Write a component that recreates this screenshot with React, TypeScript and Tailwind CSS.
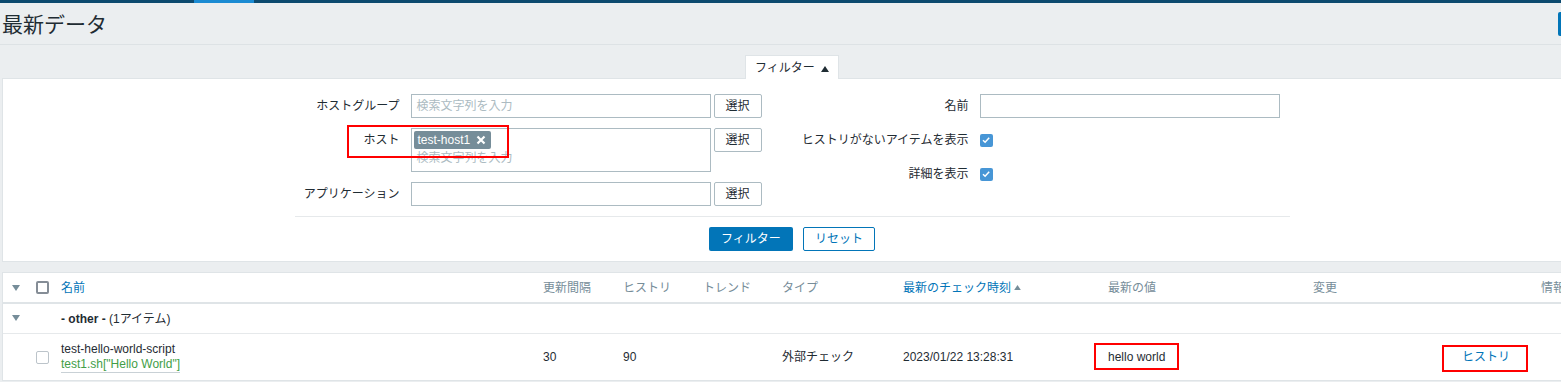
import React from "react";

const font = "font-['Liberation_Sans','Noto_Sans_CJK_JP',sans-serif]";

const SelectButton = () => (
  <button className="ml-[3px] h-6 w-12 shrink-0 rounded-[2px] border border-[#acbbc2] bg-white text-[12px] text-[#1f2c33]">
    選択
  </button>
);

const CheckedBox = () => (
  <span className="flex h-[13px] w-[13px] items-center justify-center rounded-[2px] bg-[#4796d6]">
    <svg viewBox="0 0 10 10" className="h-[10px] w-[10px]">
      <path d="M2 5.3 L4.1 7.3 L8.2 2.8" stroke="white" strokeWidth="1.5" fill="none" />
    </svg>
  </span>
);

const Arrow = () => (
  <svg viewBox="0 0 8 6" className="h-[6px] w-[8px]">
    <path d="M0 0 L8 0 L4 6 Z" fill="#768d99" />
  </svg>
);

const RedBox = ({ className }: { className: string }) => (
  <span className={"pointer-events-none absolute border-2 border-[#ff0000] " + className} />
);

const cols =
  "grid grid-cols-[25px_27px_482px_80px_80px_79px_121px_205px_205px_149px_79px_1fr]";

const App = () => {
  return (
    <div className={"h-[382px] w-[1561px] overflow-hidden bg-[#ebeef0] text-[12px] text-[#1f2c33] " + font}>
      <div className="w-[1584px]">
        {/* top bar */}
        <div className="flex h-[3px] bg-[#0c4a6f]">
          <div className="ml-[194px] w-[60px] bg-[#1b8bd3]" />
        </div>

        {/* header */}
        <div className="flex h-[42px] items-center justify-between border-b border-[#dde2e5] px-[2px]">
          <h1 className="pt-[2px] text-[21px] font-normal leading-none text-[#1f2c33]">最新データ</h1>
          <div className="h-6 w-6 rounded-[2px] bg-[#0275b8]" />
        </div>

        {/* filter */}
        <div className="mt-[10px] px-[2px]">
          <div className="flex justify-center">
            <div className="relative z-10 -mb-px flex h-6 w-[94px] items-center justify-center gap-[6px] border border-b-0 border-[#dfe4e7] bg-white text-[#1f2c33]">
              <span>フィルター</span>
              <svg viewBox="0 0 8 6" className="mt-[2px] h-[6px] w-[8px]">
                <path d="M0 6 L8 6 L4 0 Z" fill="#1f2c33" />
              </svg>
            </div>
          </div>
          <div className="border border-[#dfe4e7] bg-white pt-[15px] pb-[10px]">
            <div className="mx-auto w-[995px]">
              <div className="flex">
                {/* left column */}
                <div className="flex flex-col gap-[10px]">
                  <div className="flex items-start">
                    <label className="flex h-6 w-[105px] items-center justify-end">ホストグループ</label>
                    <div className="ml-[11px] flex h-6 w-[300px] items-center border border-[#acbbc2] px-[5px] text-[#acbbc2]">
                      検索文字列を入力
                    </div>
                    <SelectButton />
                  </div>
                  <div className="relative flex items-start">
                    <RedBox className="left-[52px] top-[-3px] h-[33px] w-[162px]" />
                    <label className="flex h-6 w-[105px] items-center justify-end">ホスト</label>
                    <div className="ml-[11px] flex h-[44px] w-[300px] flex-col border border-[#acbbc2] px-[2px] pt-[2px]">
                      <span className="flex h-[18px] w-[77px] items-center gap-[6px] rounded-[2px] bg-[#768d99] px-[4px] text-white">
                        test-host1
                        <svg viewBox="0 0 10 10" className="h-[10px] w-[10px]">
                          <path d="M1.5 1.5 L8.5 8.5 M8.5 1.5 L1.5 8.5" stroke="white" strokeWidth="2.2" />
                        </svg>
                      </span>
                      <span className="mt-[2px] pl-[3px] leading-[14px] text-[#acbbc2]">検索文字列を入力</span>
                    </div>
                    <SelectButton />
                  </div>
                  <div className="flex items-start">
                    <label className="flex h-6 w-[105px] items-center justify-end">アプリケーション</label>
                    <div className="ml-[11px] h-6 w-[300px] border border-[#acbbc2]" />
                    <SelectButton />
                  </div>
                </div>

                {/* right column */}
                <div className="flex flex-col gap-[10px]">
                  <div className="flex items-center">
                    <label className="flex h-6 w-[207px] items-center justify-end">名前</label>
                    <div className="ml-[11px] h-6 w-[300px] border border-[#acbbc2]" />
                  </div>
                  <div className="flex items-center">
                    <label className="flex h-6 w-[207px] items-center justify-end">ヒストリがないアイテムを表示</label>
                    <span className="ml-[11px]">
                      <CheckedBox />
                    </span>
                  </div>
                  <div className="flex items-center">
                    <label className="flex h-6 w-[207px] items-center justify-end">詳細を表示</label>
                    <span className="ml-[11px]">
                      <CheckedBox />
                    </span>
                  </div>
                </div>
              </div>

              <div className="mt-[10px] border-t border-[#e6e9eb] pt-[10px]">
                <div className="flex justify-center gap-[10px]">
                  <button className="h-6 w-[84px] rounded-[2px] bg-[#0275b8] text-white">フィルター</button>
                  <button className="h-6 w-[72px] rounded-[2px] border border-[#0275b8] bg-white text-[#0275b8]">
                    リセット
                  </button>
                </div>
              </div>
            </div>
          </div>
        </div>

        {/* table */}
        <div className="mt-[10px] px-[2px]">
          <div className="border border-[#dfe4e7] bg-white">
            <div className={cols + " h-[31px] items-center border-b-2 border-[#dfe4e7] text-[#768d99]"}>
              <div className="flex justify-center pt-px">
                <Arrow />
              </div>
              <div className="pl-[8px]">
                <span className="block h-[13px] w-[13px] rounded-[2px] border-2 border-[#858d96]" />
              </div>
              <div className="pl-[6px] text-[#0275b8]">名前</div>
              <div className="pl-[6px]">更新間隔</div>
              <div className="pl-[6px]">ヒストリ</div>
              <div className="pl-[6px]">トレンド</div>
              <div className="pl-[6px]">タイプ</div>
              <div className="flex items-center gap-[3px] pl-[6px] text-[#0275b8]">
                最新のチェック時刻
                <svg viewBox="0 0 8 6" className="h-[5px] w-[7px]">
                  <path d="M0 6 L8 6 L4 0 Z" fill="#768d99" />
                </svg>
              </div>
              <div className="pl-[6px]">最新の値</div>
              <div className="pl-[6px]">変更</div>
              <div />
              <div className="pl-[6px] whitespace-nowrap">情報</div>
            </div>

            <div className={cols + " h-[30px] items-center border-b border-[#e6e9eb]"}>
              <div className="flex justify-center pb-[2px]">
                <Arrow />
              </div>
              <div />
              <div className="pl-[6px]">
                <b>- other -</b> (1アイテム)
              </div>
            </div>

            <div className={cols + " h-[46px] items-center"}>
              <div />
              <div className="pl-[8px]">
                <span className="block h-[13px] w-[13px] rounded-[2px] border border-[#bcc4ca]" />
              </div>
              <div className="flex flex-col pl-[6px] leading-[15px]">
                <span>test-hello-world-script</span>
                <span className="w-fit border-b border-[#c9d1d6] text-[#429e47]">test1.sh["Hello World"]</span>
              </div>
              <div className="pl-[6px]">30</div>
              <div className="pl-[6px]">90</div>
              <div />
              <div className="pl-[6px]">外部チェック</div>
              <div className="pl-[6px]">2023/01/22 13:28:31</div>
              <div className="pl-[6px]">
                <span className="relative leading-[14px]">
                  hello world
                  <RedBox className="-left-[14px] -right-[14px] -top-[7px] -bottom-[6px]" />
                </span>
              </div>
              <div />
              <div className="pl-[6px]">
                <span className="relative text-[#0275b8]">
                  ヒストリ
                  <RedBox className="-left-[20px] -right-[18px] -top-[5px] -bottom-[8px]" />
                </span>
              </div>
              <div />
            </div>
          </div>
        </div>
      </div>
    </div>
  );
};

export default App;
